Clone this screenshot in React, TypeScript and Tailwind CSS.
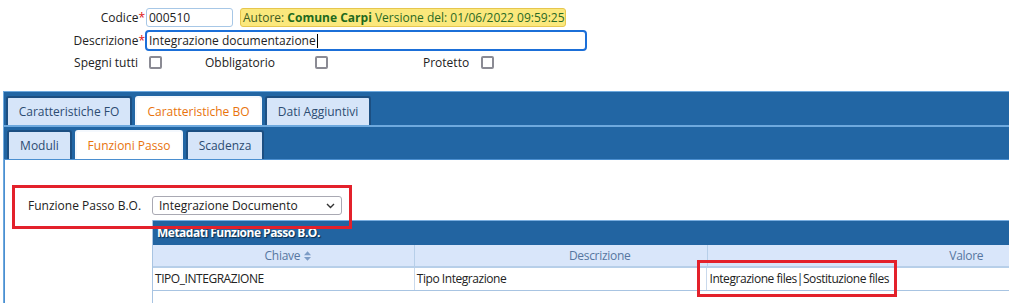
import React from "react";

const font = { fontFamily: '"Open Sans", "Liberation Sans", sans-serif' };

function Tab({ label, active, w }: { label: string; active?: boolean; w: number }) {
  return (
    <div
      className={
        "flex h-[29px] shrink-0 items-center justify-center rounded-t-[3px] border-x-2 border-t-2 text-[12px] " +
        (active
          ? "border-[#f4f8fd] bg-white text-[#e8730c]"
          : "border-[#1c4f82] bg-[#d6e5f9] text-[#2c4c72]")
      }
      style={{ width: w }}
    >
      {label}
    </div>
  );
}

function Check() {
  return <div className="h-[13px] w-[13px] shrink-0 rounded-[2px] border-2 border-[#8b8b94] bg-white" />;
}

export default function App() {
  return (
    <div className="relative h-[303px] w-[1009px] overflow-hidden bg-white text-[12px] text-[#222]" style={font}>
      {/* Top form */}
      <div className="pt-[8px]">
        <div className="flex h-[19px] items-center">
          <div className="w-[146px] pr-[1px] text-right text-[#222]">
            Codice<span className="text-[#d11]">*</span>
          </div>
          <div className="flex h-[19px] w-[87px] items-center rounded-[3px] border border-[#a7c7e6] bg-white pl-[2px] text-[12px]">
            000510
          </div>
          <div className="ml-[7px] flex h-[19px] w-[326px] items-center rounded-[3px] border border-[#e6c64e] bg-[#fbe87c] pl-[2px] text-[12px] text-[#3e5c22]">
            <span>Autore:&nbsp;</span>
            <span className="font-bold text-[#1f6a1c]">Comune Carpi</span>
            <span className="text-[#2a6a24]">&nbsp;Versione del: 01/06/2022 09:59:25</span>
          </div>
        </div>
        <div className="mt-[3px] flex h-[21px] items-center">
          <div className="w-[146px] pr-[1px] text-right">
            Descrizione<span className="text-[#d11]">*</span>
          </div>
          <div className="-ml-[1px] flex h-[21px] w-[442px] items-center rounded-[4px] border-2 border-[#1b6fd8] bg-white pl-[2px] text-[12px]">
            Integrazione documentazione
            <span className="ml-[1px] inline-block h-[14px] w-[1px] bg-black" />
          </div>
        </div>
        <div className="mt-[5px] flex h-[13px] items-center">
          <div className="w-[138px] text-right">Spegni tutti</div>
          <div className="ml-[11px]">
            <Check />
          </div>
          <div className="ml-[43px] w-[110px]">Obbligatorio</div>
          <Check />
          <div className="ml-[95px] w-[58px]">Protetto</div>
          <Check />
        </div>
      </div>

      {/* Tabs panel */}
      <div className="ml-[3px] mt-[22px] border-l border-t border-[#6ea9de] bg-[#2266a4]">
        <div className="flex gap-[3px] pl-[2px] pt-[4px]">
          <Tab label="Caratteristiche FO" w={126} />
          <Tab label="Caratteristiche BO" w={127} active />
          <Tab label="Dati Aggiuntivi" w={106} />
        </div>
        <div className="border-t-2 border-[#6ea9de] bg-[#2266a4]">
          <div className="flex gap-[3px] pl-[3px] pt-[3px]">
            <Tab label="Moduli" w={65} />
            <Tab label="Funzioni Passo" w={108} active />
            <Tab label="Scadenza" w={78} />
          </div>
          <div className="h-[150px] border-l border-t border-[#4b8fd0] bg-white">
            <div className="ml-[23px] mt-[36px] flex h-[19px] items-center">
              <div className="w-[124px] text-[12px] text-[#222]">Funzione Passo B.O.</div>
              <div className="flex h-[19px] w-[190px] items-center justify-between rounded-[3px] border border-[#a9a9b3] bg-white pl-[6px] pr-[6px] text-[12px]">
                <span>Integrazione Documento</span>
                <svg width="9" height="6" viewBox="0 0 9 6" className="mt-[1px]">
                  <path d="M1 1 L4.5 4.5 L8 1" fill="none" stroke="#333" strokeWidth="1.4" />
                </svg>
              </div>
            </div>
            {/* Table */}
            <div className="ml-[147px] mt-[5px] w-[1073px] border-l border-[#a8c4e2]">
              <div className="flex h-[25px] items-center border-t border-[#7aaee0] bg-[#2264a1] pl-[4px] text-[12px] font-bold tracking-[-0.5px] text-white [text-shadow:1px_1px_1px_#0b2a4a]">
                Metadati Funzione Passo B.O.
              </div>
              <div className="flex h-[23px] border-b-2 border-[#b7cfe9] bg-[#d9e6fa] text-[12px] tracking-[-0.3px] text-[#5676a0]">
                <div className="flex w-[262px] items-center justify-center gap-[4px] border-r border-[#b7cfe9] pl-[9px]">
                  Chiave
                  <svg width="7" height="10" viewBox="0 0 8 11">
                    <path d="M4 0 L8 4.5 L0 4.5 Z" fill="#7c9cc6" />
                    <path d="M4 11 L8 6.5 L0 6.5 Z" fill="#7c9cc6" />
                  </svg>
                </div>
                <div className="flex w-[293px] items-center justify-center border-r border-[#b7cfe9] pl-[78px]">Descrizione</div>
                <div className="flex w-[518px] items-center justify-center">Valore</div>
              </div>
              <div className="flex h-[23px] border-b border-[#a8c4e2] text-[12px] tracking-[-0.45px] text-[#222]">
                <div className="flex w-[262px] items-center border-r border-[#c9d9ec] pl-[2px]">TIPO_INTEGRAZIONE</div>
                <div className="flex w-[293px] items-center border-r border-[#c9d9ec] pl-[2px]">Tipo Integrazione</div>
                <div className="flex w-[518px] items-center pl-[2px]">Integrazione files|Sostituzione files</div>
              </div>
              <div className="h-[20px]" />
            </div>
          </div>
        </div>
      </div>

      {/* Red annotation boxes */}
      <div className="pointer-events-none absolute left-[12px] top-[185px] h-[44px] w-[340px] border-[3px] border-[#e3212b]" />
      <div className="pointer-events-none absolute left-[697px] top-[260px] h-[37px] w-[200px] border-[3px] border-[#e3212b]" />
    </div>
  );
}
